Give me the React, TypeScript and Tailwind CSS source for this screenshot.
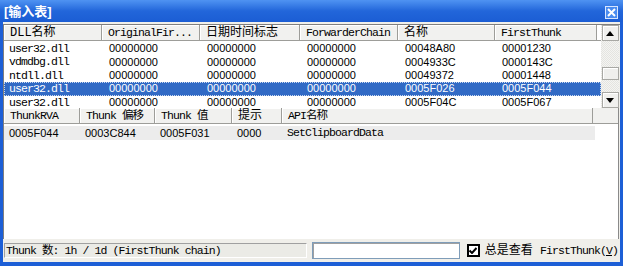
import React from "react";

const mono = "font-['Liberation_Mono','Noto_Sans_CJK_SC',monospace] text-[11.5px] tracking-[-0.9px]";
const sans = "font-['Liberation_Sans','Noto_Sans_CJK_SC',sans-serif] text-[11px]";
const cjk = "font-['Liberation_Mono','Noto_Sans_CJK_SC',monospace] text-[12px]";

const topCols = [98, 98, 100, 98, 97, 102];
const bottomCols = [76, 75, 77, 50, 311];

const rows = [
  ["user32.dll", "00000000", "00000000", "00000000", "00048A80", "00001230"],
  ["vdmdbg.dll", "00000000", "00000000", "00000000", "0004933C", "0000143C"],
  ["ntdll.dll", "00000000", "00000000", "00000000", "00049372", "00001448"],
  ["user32.dll", "00000000", "00000000", "00000000", "0005F026", "0005F044"],
  ["user32.dll", "00000000", "00000000", "00000000", "0005F04C", "0005F067"],
];

const HeaderCell: React.FC<{ w: number; children: React.ReactNode }> = ({ w, children }) => (
  <div
    style={{ width: w }}
    className="h-full shrink-0 flex items-center pl-[6px] bg-[#f1f1ef] border-r border-[#9d9d99] shadow-[inset_1px_1px_0_#ffffff] overflow-hidden whitespace-nowrap text-black"
  >
    {children}
  </div>
);

const Arrow: React.FC<{ up?: boolean }> = ({ up }) => (
  <div className="w-[17px] h-[16px] bg-[#f0f0ee] border border-[#a8a8a4] shadow-[inset_1px_1px_0_#ffffff] flex items-center justify-center">
    <svg width="8" height="5" viewBox="0 0 8 5">
      {up ? <polygon points="0,5 8,5 4,0" fill="#000" /> : <polygon points="0,0 8,0 4,5" fill="#000" />}
    </svg>
  </div>
);

export default function App() {
  return (
    <div className="w-[623px] h-[266px] bg-[#1d5fd6] flex flex-col overflow-hidden">
      {/* title bar */}
      <div className="h-[22px] shrink-0 flex items-center justify-between pl-[4px] pr-[5px] bg-gradient-to-b from-[#4f93f2] via-[#2266da] to-[#1b5dd4]">
        <span className="font-['Liberation_Sans','Noto_Sans_CJK_SC',sans-serif] text-[13px] font-bold text-white leading-none">
          [输入表]
        </span>
        <div className="w-[13px] h-[13px] mt-[2px] bg-[#4a8cf0] border border-[#d8e6ff] flex items-center justify-center">
          <svg width="9" height="9" viewBox="0 0 9 9">
            <path d="M1 1 L8 8 M8 1 L1 8" stroke="#fff" strokeWidth="2" />
          </svg>
        </div>
      </div>

      <div className="flex-1 flex flex-col mx-[3px] mb-[4px] bg-[#f0efea] pt-[2px]">
        {/* top list */}
        <div className="h-[84px] shrink-0 flex border-l border-t border-[#7f7f7f] bg-white">
          <div className="flex-1 flex flex-col">
            <div className="h-[16px] shrink-0 flex border-b border-[#9d9d99]">
              <HeaderCell w={topCols[0]}><span className={cjk}>DLL名称</span></HeaderCell>
              <HeaderCell w={topCols[1]}><span className={mono}>OriginalFir...</span></HeaderCell>
              <HeaderCell w={topCols[2]}><span className={cjk}>日期时间标志</span></HeaderCell>
              <HeaderCell w={topCols[3]}><span className={mono}>ForwarderChain</span></HeaderCell>
              <HeaderCell w={topCols[4]}><span className={cjk}>名称</span></HeaderCell>
              <HeaderCell w={topCols[5]}><span className={mono}>FirstThunk</span></HeaderCell>
            </div>
            <div className="flex-1 flex flex-col pt-[1px]">
              {rows.map((r, i) => {
                const sel = i === 3;
                return (
                  <div
                    key={i}
                    className={`h-[13.4px] flex items-center ${
                      sel ? "bg-[#316ac5] text-white outline outline-1 outline-dotted outline-[#c9d8f0] -outline-offset-1" : "text-black"
                    }`}
                  >
                    {r.map((c, j) => (
                      <div
                        key={j}
                        style={{ width: topCols[j] }}
                        className={`shrink-0 whitespace-nowrap leading-none ${j === 0 ? `pl-[5px] ${mono}` : `pl-[7px] ${sans}`}`}
                      >
                        {c}
                      </div>
                    ))}
                  </div>
                );
              })}
            </div>
          </div>
          {/* scrollbar */}
          <div className="w-[18px] shrink-0 flex flex-col items-center bg-[repeating-conic-gradient(#f4f4f2_0%_25%,#e4e4e0_0%_50%)] bg-[length:2px_2px]">
            <Arrow up />
            <div className="h-[26px]" />
            <div className="w-[17px] h-[13px] bg-[#efefed] border border-[#a8a8a4] shadow-[inset_1px_1px_0_#ffffff]" />
            <div className="flex-1" />
            <Arrow />
          </div>
          <div className="w-[1px] bg-[#f0efea]" />
        </div>

        {/* lower list */}
        <div className="h-[131px] shrink-0 flex flex-col bg-white border-l border-[#7f7f7f] border-r-[1px] border-r-[#8a8a8a] mr-[1px]">
          <div className="h-[16px] shrink-0 flex border-b border-[#9d9d99] bg-[#f1f1ef]">
            <HeaderCell w={bottomCols[0]}><span className={mono}>ThunkRVA</span></HeaderCell>
            <HeaderCell w={bottomCols[1]}><span className={mono}>Thunk 偏移</span></HeaderCell>
            <HeaderCell w={bottomCols[2]}><span className={mono}>Thunk 值</span></HeaderCell>
            <HeaderCell w={bottomCols[3]}><span className={cjk}>提示</span></HeaderCell>
            <HeaderCell w={bottomCols[4]}><span className={mono}>API名称</span></HeaderCell>
            <div className="flex-1 bg-[#f1f1ef]" />
          </div>
          <div className="pt-[2px]">
            <div className="h-[14px] flex items-center bg-[#ececec] text-black" style={{ width: 591 }}>
              {["0005F044", "0003C844", "0005F031", "0000", "SetClipboardData"].map((c, j) => (
                <div
                  key={j}
                  style={{ width: bottomCols[j] }}
                  className={`shrink-0 pl-[5px] whitespace-nowrap leading-none ${j === 4 ? mono : sans}`}
                >
                  {c}
                </div>
              ))}
            </div>
          </div>
        </div>

        {/* status bar */}
        <div className="flex-1 flex items-center gap-[5px] pl-[1px] pr-[2px]">
          <div className={`w-[305px] h-[15px] flex items-center pl-[1px] bg-[#ebebe6] border border-t-[#a0a0a0] border-l-[#a0a0a0] border-b-white border-r-white whitespace-nowrap leading-none text-black ${mono}`}>
            Thunk 数: 1h / 1d (FirstThunk chain)
          </div>
          <div className="w-[149px] h-[17px] bg-white border border-[#7f9db9] shadow-[inset_1px_1px_0_#a0a0a0]" />
          <div className="flex items-center gap-[5px] ml-[2px]">
            <div className="w-[13px] h-[13px] bg-white border-2 border-black flex items-center justify-center">
              <svg width="8" height="7" viewBox="0 0 8 7">
                <path d="M0.5 3.5 L3 6 L7.5 1" stroke="#000" strokeWidth="2" fill="none" />
              </svg>
            </div>
            <span className={`${cjk} text-black whitespace-nowrap leading-none`}>
              总是查看 <span className="tracking-[-0.9px] text-[11.5px]">FirstThunk(<span className="underline">V</span>)</span>
            </span>
          </div>
        </div>
      </div>
    </div>
  );
}
